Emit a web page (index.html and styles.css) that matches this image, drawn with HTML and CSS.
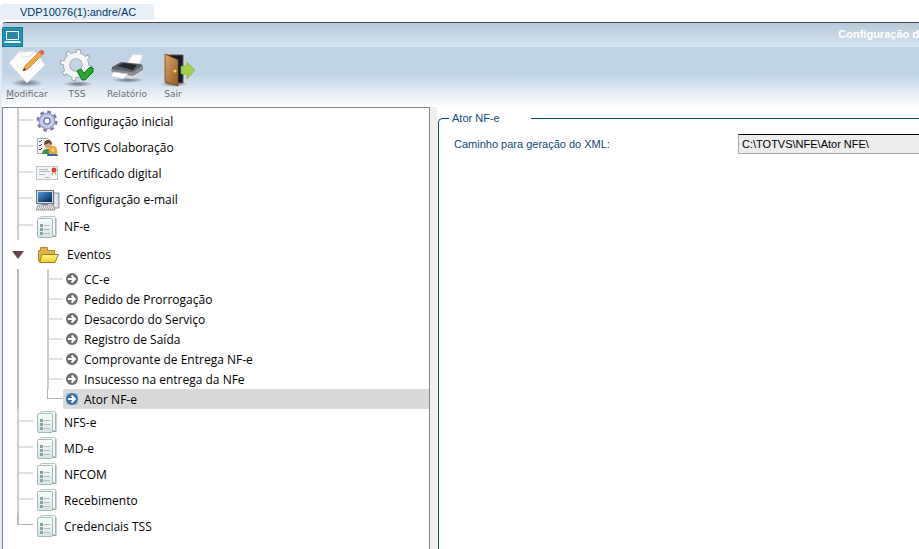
FILE: index.html
```html
<!DOCTYPE html>
<html lang="pt-BR">
<head>
    <meta charset="UTF-8">
    <meta name="viewport" content="width=device-width, initial-scale=1.0">
    <title>VDP10076 - Ator NF-e</title>
    <link rel="stylesheet" href="styles.css">
</head>
<body>

    <!-- Shared icons -->
    <svg class="defs" width="0" height="0" aria-hidden="true">
        <defs>
            <linearGradient id="sheet" x1="0" y1="0" x2="0" y2="1">
                <stop offset="0" stop-color="#fbfdfd"/>
                <stop offset="1" stop-color="#d6e3e2"/>
            </linearGradient>
            <linearGradient id="wood" x1="0" y1="0" x2="1" y2="1">
                <stop offset="0" stop-color="#dda566"/>
                <stop offset="1" stop-color="#8f5a24"/>
            </linearGradient>
            <linearGradient id="screen" x1="0" y1="0" x2="1" y2="1">
                <stop offset="0" stop-color="#4a9be0"/>
                <stop offset="1" stop-color="#04204e"/>
            </linearGradient>
            <linearGradient id="folder" x1="0" y1="0" x2="0" y2="1">
                <stop offset="0" stop-color="#fff48a"/>
                <stop offset="1" stop-color="#f2ce28"/>
            </linearGradient>
            <radialGradient id="shade">
                <stop offset="0" stop-color="#3c4650" stop-opacity=".7"/>
                <stop offset="1" stop-color="#3c4650" stop-opacity="0"/>
            </radialGradient>
            <symbol id="docs" viewBox="0 0 22 22">
                <rect x="4.500" y=".5" width="15" height="19" rx="1" fill="#f3f8f8" stroke="#b4c8c9"/>
                <path d="M20 2v18.500H6" fill="none" stroke="#8fa5a6"/>
                <rect x="1.500" y="2.500" width="15" height="19" rx="1" fill="url(#sheet)" stroke="#a2babb"/>
                <path d="M4 8h3v3H4zM4 12h3v3H4zM4 16h3v3H4z" fill="#86a3a2"/>
                <path d="M8 9.500h6M8 13.500h6M8 17.500h6" stroke="#b2c0c0"/>
            </symbol>
            <symbol id="arrow" viewBox="0 0 12 12">
                <circle cx="6" cy="6" r="6" fill="currentColor"/>
                <path d="M2 6h7M5.500 2.500L9 6 5.500 9.500" fill="none" stroke="#fff" stroke-width="1.800"/>
            </symbol>
        </defs>
    </svg>

    <div class="tabs">
        <a class="tab" href="#">VDP10076(1):andre/AC</a>
    </div>

    <div class="window">
        <header class="titlebar">
            <svg class="app-icon" width="21" height="20" viewBox="0 0 21 20">
                <path d="M0 20V2q0-2 2-2h19v20z" fill="#0c7799"/>
                <path d="M1.500 18.500V1.500h18v17z" fill="#1a8bad" stroke="#2f9bbb"/>
                <rect x="4.500" y="4.500" width="12" height="8" fill="#2b86a5" stroke="#fff"/>
                <path d="M3 14h15l1 2H2z" fill="#e9f6fa"/>
            </svg>
            <h1>Configuração d</h1>
        </header>

        <nav class="toolbar">
            <button type="button" class="tool">
                <svg width="36" height="38" viewBox="0 0 36 38">
                    <ellipse cx="18" cy="34" rx="16" ry="4" fill="url(#shade)"/>
                    <path d="M0 14L11 2l5 1 7-1 5 2 8 12-18 18z" fill="#fcfcfc" stroke="#d9dcdf" stroke-width=".8"/>
                    <path d="M11 2l2 6 9-1 2-4" fill="none" stroke="#e0e3e6"/>
                    <path d="M14 22l2-5L31 2l3 3-15 15z" fill="#f5a742" stroke="#b87425" stroke-width=".7"/>
                    <path d="M30 3l2-2q4 0 3 4l-2 1z" fill="#d9605e"/>
                    <path d="M14 22l1-3 2 2z" fill="#333"/>
                </svg>
                <span><u>M</u>odificar</span>
            </button>
            <button type="button" class="tool">
                <svg width="36" height="38" viewBox="0 0 36 38">
                    <ellipse cx="19" cy="35" rx="15" ry="3" fill="url(#shade)"/>
                    <circle cx="17" cy="16" r="13.500" fill="none" stroke="#9a9fa4" stroke-width="5" stroke-dasharray="4.200 6.403"/>
                    <circle cx="17" cy="16" r="9.500" fill="none" stroke="#a2a7ac" stroke-width="7"/>
                    <circle cx="17" cy="16" r="13" fill="none" stroke="#f6f7f8" stroke-width="4" stroke-dasharray="2.800 7.410" stroke-dashoffset="-.7"/>
                    <circle cx="17" cy="16" r="9.500" fill="none" stroke="#f4f5f6" stroke-width="5.400"/>
                    <path d="M18 22l4-2 3 4 6-6 3 1v4l-8 8h-3z" fill="#2aa72e" stroke="#0f7219"/>
                </svg>
                <span>TSS</span>
            </button>
            <button type="button" class="tool">
                <svg width="36" height="38" viewBox="0 0 36 38">
                    <ellipse cx="19" cy="31" rx="16" ry="3" fill="url(#shade)"/>
                    <path d="M18 14l6-9 10 1-5 13z" fill="#fdfdfd" stroke="#d5dbe2"/>
                    <path d="M3 18l9-5 20 2 2 3-8 9-23-4z" fill="#5c6167"/>
                    <path d="M8 17l7-3 13 2-4 5z" fill="#25292d"/>
                    <path d="M2 20l22 3 10-7v6l-9 6-22-4z" fill="#858b92"/>
                    <path d="M4 23l15 2-5 5-12-3z" fill="#fff" stroke="#c6ccd1" stroke-width=".6"/>
                    <path d="M18 26l6 1 10-6v3l-10 6-8-1z" fill="#d6dade"/>
                </svg>
                <span>Relatório</span>
            </button>
            <button type="button" class="tool narrow">
                <svg width="36" height="38" viewBox="0 0 36 38">
                    <ellipse cx="15" cy="35" rx="14" ry="3" fill="url(#shade)"/>
                    <path d="M7 6h17v28H7z" fill="#101a34" stroke="#80501e"/>
                    <path d="M6 5l13 6v26L6 33z" fill="url(#wood)" stroke="#7a4b1c" stroke-width=".8"/>
                    <circle cx="16" cy="22" r="1.500" fill="#f8d94a"/>
                    <path d="M22 17h6v-4l8 8-8 9v-5h-6z" fill="#a2d04a" stroke="#7cab31" stroke-width=".6"/>
                </svg>
                <span>Sair</span>
            </button>
        </nav>

        <div class="content">
            <aside class="tree">
                <ul class="nodes">
                    <li class="node"><a href="#">
                        <svg width="22" height="22" viewBox="0 0 22 22">
                            <circle cx="11" cy="11" r="8.600" fill="none" stroke="#7677a8" stroke-width="3.800" stroke-dasharray="3.400 3.355"/>
                            <circle cx="11" cy="11" r="6" fill="#b6b8e2" stroke="#9a9ccb" stroke-width="5"/>
                            <circle cx="11" cy="11" r="5.500" fill="none" stroke="#c9cbed" stroke-width="3"/>
                            <circle cx="11" cy="11" r="3" fill="#fff" stroke="#65669e"/>
                        </svg>
                        Configuração inicial</a></li>
                    <li class="node"><a href="#">
                        <svg width="22" height="22" viewBox="0 0 22 22">
                            <path d="M1.500 2.500h10l3 3v12h-13z" fill="#f4f6f8" stroke="#a5acb3"/>
                            <path d="M3 5l1 1 2-2M3 9l1 1 2-2M3 13l1 1 2-2" fill="none" stroke="#444"/>
                            <path d="M6 18q0-5 6-5t5 5z" fill="#3d9145"/>
                            <circle cx="12" cy="9" r="3.500" fill="#dfa27c"/>
                            <path d="M8 9q0-5 4-5t4 5l-3-2z" fill="#5c4632"/>
                            <path d="M11 20q0-4 5-4t6 4z" fill="#3466b8"/>
                            <path d="M13 18q-1-8 4-8t4 8z" fill="#eaa920"/>
                            <circle cx="17" cy="14" r="2" fill="#f5c49a"/>
                        </svg>
                        TOTVS Colaboração</a></li>
                    <li class="node"><a href="#">
                        <svg width="22" height="22" viewBox="0 0 22 22">
                            <rect x=".5" y="4.500" width="21" height="13" fill="#f4f5f7" stroke="#c0c6cf"/>
                            <path d="M3 7.500h9M3 9.500h11M3 12.500h6M9 15.500h5" stroke="#b1b4bb"/>
                            <circle cx="18" cy="8" r="2.500" fill="#d84a2c"/>
                            <path d="M17 10l-1 3M19 10l1 3" stroke="#f19a7d"/>
                        </svg>
                        Certificado digital</a></li>
                    <li class="node tall"><a href="#">
                        <svg width="24" height="22" viewBox="0 0 24 22">
                            <path d="M17 4h6v15h-6z" fill="#d4d8dd" stroke="#8b929c"/>
                            <path d="M20 5v13" stroke="#f6f7f9"/>
                            <rect x=".5" y="1.500" width="17" height="13" fill="#d7dade" stroke="#6c727b"/>
                            <rect x="2" y="3" width="14" height="10" fill="url(#screen)"/>
                            <path d="M6 14h6v2H6z" fill="#787f89"/>
                            <path d="M2 16h15l2 5H0z" fill="#dfe1e4" stroke="#747a82" stroke-width=".7"/>
                            <path d="M3 18h13M2 20h15" stroke="#858b93" stroke-dasharray="1 1"/>
                        </svg>
                        Configuração e-mail</a></li>
                    <li class="node tall"><a href="#"><svg width="22" height="22"><use href="#docs"/></svg>NF-e</a></li>
                    <li class="branch">
                        <a href="#" class="parent">
                            <svg class="toggle" width="12" height="8" viewBox="0 0 12 8"><path d="M0 0h12L6 8z" fill="#66484a"/></svg>
                            <svg width="22" height="18" viewBox="0 0 22 18">
                                <path d="M1.500 15V4.500h2V1.500h7v3h7V15z" fill="#deb34a" stroke="#b48a2c"/>
                                <path d="M5 8.500h16.500L18 16.500H2.500z" fill="url(#folder)" stroke="#a07c1c"/>
                            </svg>
                            Eventos</a>
                        <ul class="children">
                            <li class="child"><a href="#"><svg width="12" height="12"><use href="#arrow"/></svg>CC-e</a></li>
                            <li class="child"><a href="#"><svg width="12" height="12"><use href="#arrow"/></svg>Pedido de Prorrogação</a></li>
                            <li class="child"><a href="#"><svg width="12" height="12"><use href="#arrow"/></svg>Desacordo do Serviço</a></li>
                            <li class="child"><a href="#"><svg width="12" height="12"><use href="#arrow"/></svg>Registro de Saída</a></li>
                            <li class="child"><a href="#"><svg width="12" height="12"><use href="#arrow"/></svg>Comprovante de Entrega NF-e</a></li>
                            <li class="child"><a href="#"><svg width="12" height="12"><use href="#arrow"/></svg>Insucesso na entrega da NFe</a></li>
                            <li class="child"><a href="#" class="selected"><svg width="12" height="12"><use href="#arrow"/></svg>Ator NF-e</a></li>
                        </ul>
                    </li>
                    <li class="node"><a href="#"><svg width="22" height="22"><use href="#docs"/></svg>NFS-e</a></li>
                    <li class="node"><a href="#"><svg width="22" height="22"><use href="#docs"/></svg>MD-e</a></li>
                    <li class="node"><a href="#"><svg width="22" height="22"><use href="#docs"/></svg>NFCOM</a></li>
                    <li class="node"><a href="#"><svg width="22" height="22"><use href="#docs"/></svg>Recebimento</a></li>
                    <li class="node"><a href="#"><svg width="22" height="22"><use href="#docs"/></svg>Credenciais TSS</a></li>
                </ul>
            </aside>

            <main class="panel">
                <fieldset>
                    <legend>Ator NF-e</legend>
                    <div class="field">
                        <label for="xmlPath">Caminho para geração do XML:</label>
                        <input type="text" id="xmlPath" value="C:\TOTVS\NFE\Ator NFE\" readonly>
                    </div>
                </fieldset>
            </main>
        </div>
    </div>

</body>
</html>
```
FILE: styles.css
```css
* {
    box-sizing: border-box;
}

body {
    margin: 0;
    min-height: 100vh;
    display: flex;
    flex-direction: column;
    background-color: #fff;
    font-family: "Liberation Sans", Arial, sans-serif;
    font-size: 11px;
    overflow: hidden;
}

a {
    color: inherit;
    text-decoration: none;
}

ul {
    list-style: none;
    margin: 0;
    padding: 0;
}

svg {
    display: block;
    flex: none;
}

.defs {
    position: absolute;
}

/* Session tab */
.tabs {
    display: flex;
    padding-top: 4px;
    height: 22px;
}

.tab {
    height: 16px;
    padding: 0 18px 0 20px;
    line-height: 17px;
    color: #00386b;
    background-color: #e8eff6;
    border-radius: 4px 4px 0 0;
}

/* Window */
.window {
    flex: 1;
    display: flex;
    flex-direction: column;
    border-top: 1px solid #444b52;
    border-left: 2px solid #dfeaf3;
    border-radius: 6px 0 0 0;
}

.titlebar {
    display: flex;
    align-items: flex-end;
    justify-content: space-between;
    height: 24px;
    background: linear-gradient(#b9c8d8, #d7e5f1);
    border-radius: 5px 0 0 0;
}

.titlebar h1 {
    margin: 0;
    font-size: 11px;
    line-height: 26px;
    color: #fff;
    white-space: nowrap;
}

.toolbar {
    display: flex;
    height: 60px;
    background: linear-gradient(#c1d4e5 45%, #fff);
}

.tool {
    display: flex;
    flex-direction: column;
    align-items: center;
    width: 50px;
    padding: 2px 0 0;
    border: none;
    background: none;
    font-family: "DejaVu Sans", Verdana, sans-serif;
    font-size: 9px;
    line-height: 14px;
    color: #6b6f74;
    cursor: pointer;
}

.narrow {
    width: 42px;
}

.narrow svg {
    margin-left: 8px;
}

.content {
    flex: 1;
    display: flex;
}

/* Tree */
.tree {
    flex: 0 0 428px;
    border: 1px solid #828790;
    border-bottom: none;
    font-family: "Open Sans", "Segoe UI", sans-serif;
    font-size: 12px;
    color: #000;
}

.node {
    position: relative;
    height: 26px;
}

.tall {
    height: 27px;
}

.node a {
    display: flex;
    align-items: center;
    gap: 6px;
    height: 100%;
    padding-left: 33px;
}

/* connector lines */
.node::before {
    content: "";
    position: absolute;
    left: 14px;
    top: 0;
    bottom: 0;
    width: 2px;
    background-color: #d0ccca;
}

.node::after,
.child::after {
    content: "";
    position: absolute;
    left: 16px;
    top: 11px;
    width: 14px;
    height: 2px;
    background-color: #e2dfdd;
}

.nodes > .node:last-child::before {
    height: 12px;
    background-color: #bfb8b5;
}

.nodes > .node:last-child::after {
    height: 1px;
    background-color: #b8b2ae;
}

.parent {
    display: flex;
    align-items: center;
    height: 29px;
    gap: 8px;
    padding-left: 9px;
}

.toggle {
    margin-right: 5px;
}

.children {
    margin-left: 14px;
    border-left: 2px solid #bfb8b5;
    padding-left: 28px;
}

.child {
    position: relative;
    height: 20px;
    padding-left: 16px;
}

.child a {
    display: flex;
    align-items: center;
    gap: 6px;
    height: 100%;
    padding-left: 3px;
    color: #000;
}

.child svg {
    color: #6f6f6f;
}

.child .selected {
    background-color: #d9d9d9;
    border-radius: 2px 0 0 2px;
}

.child .selected svg {
    color: #3d6d9c;
    background-color: #a9cdee;
}

.child::before {
    content: "";
    position: absolute;
    left: 0;
    top: 0;
    bottom: 0;
    width: 2px;
    background-color: #d0ccca;
}

.child::after {
    left: 2px;
    top: 9px;
}

.child:last-child::before {
    width: 1px;
    height: 10px;
    background-color: #b8b2ae;
}

.child:last-child::after {
    left: 0;
    width: 16px;
    height: 1px;
    background-color: #b8b2ae;
}

/* Right panel */
.panel {
    flex: 1;
    display: flex;
    min-width: 0;
    padding-top: 4px;
    border-left: 7px solid #f0f0f0;
    color: #0a4a75;
}

fieldset {
    flex: 1;
    min-width: 0;
    margin: 0 0 0 1px;
    padding: 9px 0 0 15px;
    border: 1px solid #004b73;
    border-right: none;
    border-bottom: none;
    border-radius: 5px 0 0 0;
}

legend {
    width: 82px;
    margin-left: -5px;
    padding: 0 3px;
    line-height: 14px;
}

.field {
    display: flex;
    align-items: center;
}

.field label {
    width: 284px;
    flex: none;
}

.field input {
    flex: 1;
    min-width: 0;
    height: 20px;
    padding: 0 3px;
    border: 1px solid #a6a6a6;
    border-top-color: #000;
    border-right: none;
    background-color: #ededed;
    font: inherit;
    color: #000;
}
```
